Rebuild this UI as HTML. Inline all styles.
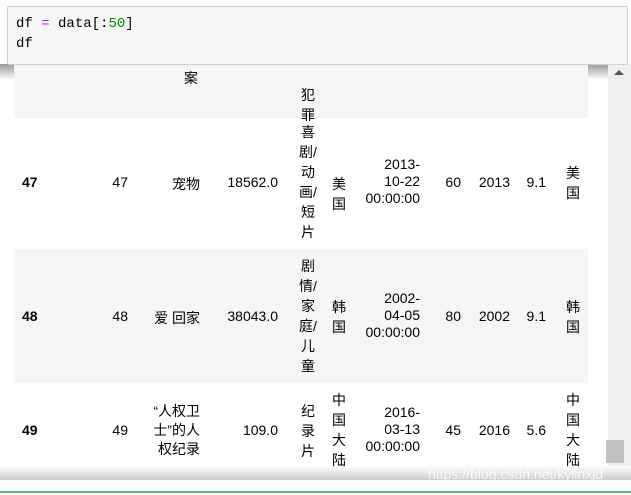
<!DOCTYPE html><html><head><meta charset="utf-8"><style>
body{margin:0;width:631px;height:495px;background:#fff;position:relative;overflow:hidden;font-family:"Liberation Sans","Noto Sans CJK SC",sans-serif;font-size:14px;color:#000}
.a{position:absolute;white-space:nowrap}
.r{text-align:right}.c{text-align:center}
.v{line-height:20px}.d{line-height:17px}
</style></head><body>
<div class="a" style="left:0;top:64px;width:608px;height:16px;background:linear-gradient(#999,#fff)"></div>
<div class="a" style="left:14px;top:64px;width:574px;height:54px;background:#f5f5f5"></div>
<div class="a" style="left:14px;top:249px;width:574px;height:134px;background:#f5f5f5"></div>
<div class="a" style="left:608px;top:64px;width:23px;height:414px;background:#f0f0f0"></div>
<div class="a" style="left:614px;top:70px;width:0;height:0;border-left:5px solid transparent;border-right:5px solid transparent;border-bottom:5px solid #555"></div>
<div class="a" style="left:606px;top:440px;width:18px;height:23px;background:#c1c1c1"></div>
<div class="a" style="left:0;top:466px;width:631px;height:14px;background:linear-gradient(#fff,#ccc)"></div>
<div class="a" style="left:0;top:480px;width:631px;height:11px;background:#fff"></div>
<div class="a" style="left:0;top:491px;width:631px;height:2px;background:#5cb85c"></div>
<div class="a" style="left:0;top:493px;width:631px;height:2px;background:#fff"></div>
<!-- row 46 tail -->
<div class="a v" style="left:184px;top:68px">案</div>
<div class="a v" style="left:301px;top:85px">犯<br>罪</div>
<!-- row 47 -->
<div class="a" style="left:22px;top:174px;font-weight:bold">47</div>
<div class="a r" style="left:90px;width:38px;top:174px">47</div>
<div class="a r" style="left:140px;width:60px;top:174px">宠物</div>
<div class="a r" style="left:210px;width:68px;top:174px">18562.0</div>
<div class="a v c" style="left:292px;width:32px;top:122px">喜<br>剧/<br>动<br>画/<br>短<br>片</div>
<div class="a c" style="left:326px;width:26px;top:174px;line-height:20px">美<br>国</div>
<div class="a d r" style="left:350px;width:70px;top:156px">2013-<br>10-22<br>00:00:00</div>
<div class="a r" style="left:430px;width:31px;top:174px">60</div>
<div class="a r" style="left:470px;width:40px;top:174px">2013</div>
<div class="a r" style="left:516px;width:30px;top:174px">9.1</div>
<div class="a v c" style="left:560px;width:26px;top:163px">美<br>国</div>
<!-- row 48 -->
<div class="a" style="left:22px;top:308px;font-weight:bold">48</div>
<div class="a r" style="left:90px;width:38px;top:308px">48</div>
<div class="a r" style="left:140px;width:60px;top:308px">爱 回家</div>
<div class="a r" style="left:210px;width:68px;top:308px">38043.0</div>
<div class="a v c" style="left:292px;width:32px;top:256px">剧<br>情/<br>家<br>庭/<br>儿<br>童</div>
<div class="a v c" style="left:326px;width:26px;top:297px">韩<br>国</div>
<div class="a d r" style="left:350px;width:70px;top:290px">2002-<br>04-05<br>00:00:00</div>
<div class="a r" style="left:430px;width:31px;top:308px">80</div>
<div class="a r" style="left:470px;width:40px;top:308px">2002</div>
<div class="a r" style="left:516px;width:30px;top:308px">9.1</div>
<div class="a v c" style="left:560px;width:26px;top:297px">韩<br>国</div>
<!-- row 49 -->
<div class="a" style="left:22px;top:422px;font-weight:bold">49</div>
<div class="a r" style="left:90px;width:38px;top:422px">49</div>
<div class="a r" style="left:130px;width:70px;top:402px;line-height:19px">“人权卫<br>士”的人<br>权纪录</div>
<div class="a r" style="left:210px;width:68px;top:422px">109.0</div>
<div class="a v c" style="left:292px;width:32px;top:401px">纪<br>录<br>片</div>
<div class="a v c" style="left:326px;width:26px;top:390px">中<br>国<br>大<br>陆</div>
<div class="a d r" style="left:350px;width:70px;top:404px">2016-<br>03-13<br>00:00:00</div>
<div class="a r" style="left:430px;width:31px;top:422px">45</div>
<div class="a r" style="left:470px;width:40px;top:422px">2016</div>
<div class="a r" style="left:516px;width:30px;top:422px">5.6</div>
<div class="a v c" style="left:560px;width:26px;top:390px">中<br>国<br>大<br>陆</div>
<div class="a" style="left:428px;top:466px;color:rgba(255,255,255,.85);font-size:14px">https://blog.csdn.net/kylinxjd</div>
<!-- code cell -->
<div class="a" style="left:7px;top:6px;width:619px;height:57px;background:#f7f7f7;border:1px solid #cfcfcf;border-radius:2px"></div>
<div class="a" style="left:16px;top:14px;font-family:'Liberation Mono',monospace;font-size:14px;line-height:20px">df <span style="color:#a2f">=</span> data[:<span style="color:#080">50</span>]<br>df</div>
</body></html>
